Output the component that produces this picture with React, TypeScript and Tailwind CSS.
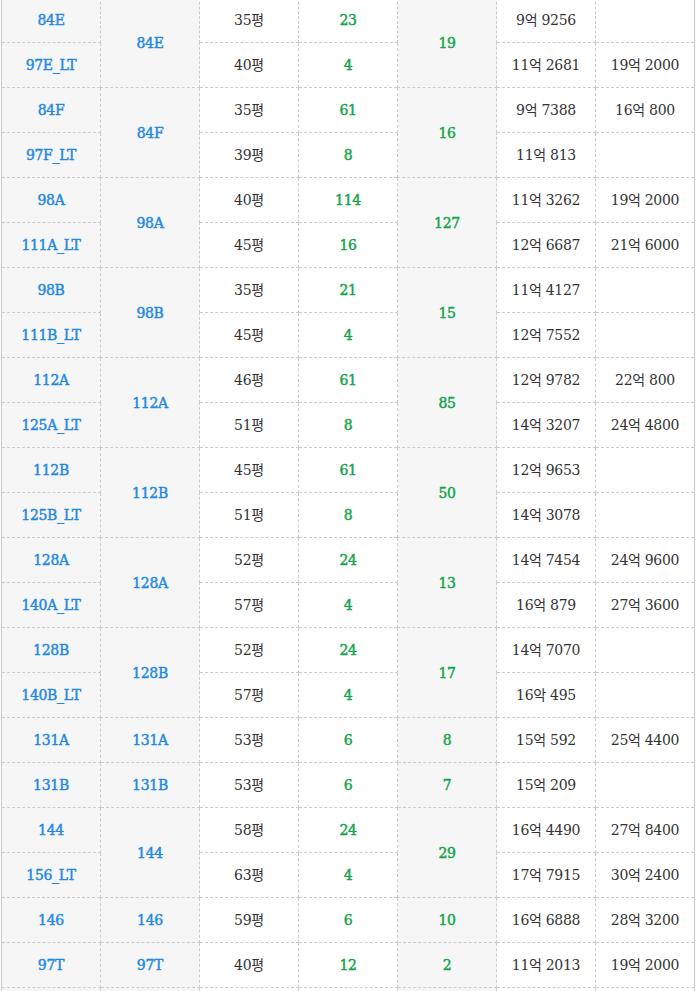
type Row = { type: string; size: string; count: string; p1: string; p2: string };
type Group = { name: string; total: string; rows: Row[] };

const groups: Group[] = [
  { name: "84E", total: "19", rows: [
    { type: "84E", size: "35평", count: "23", p1: "9억 9256", p2: "" },
    { type: "97E_LT", size: "40평", count: "4", p1: "11억 2681", p2: "19억 2000" },
  ] },
  { name: "84F", total: "16", rows: [
    { type: "84F", size: "35평", count: "61", p1: "9억 7388", p2: "16억 800" },
    { type: "97F_LT", size: "39평", count: "8", p1: "11억 813", p2: "" },
  ] },
  { name: "98A", total: "127", rows: [
    { type: "98A", size: "40평", count: "114", p1: "11억 3262", p2: "19억 2000" },
    { type: "111A_LT", size: "45평", count: "16", p1: "12억 6687", p2: "21억 6000" },
  ] },
  { name: "98B", total: "15", rows: [
    { type: "98B", size: "35평", count: "21", p1: "11억 4127", p2: "" },
    { type: "111B_LT", size: "45평", count: "4", p1: "12억 7552", p2: "" },
  ] },
  { name: "112A", total: "85", rows: [
    { type: "112A", size: "46평", count: "61", p1: "12억 9782", p2: "22억 800" },
    { type: "125A_LT", size: "51평", count: "8", p1: "14억 3207", p2: "24억 4800" },
  ] },
  { name: "112B", total: "50", rows: [
    { type: "112B", size: "45평", count: "61", p1: "12억 9653", p2: "" },
    { type: "125B_LT", size: "51평", count: "8", p1: "14억 3078", p2: "" },
  ] },
  { name: "128A", total: "13", rows: [
    { type: "128A", size: "52평", count: "24", p1: "14억 7454", p2: "24억 9600" },
    { type: "140A_LT", size: "57평", count: "4", p1: "16억 879", p2: "27억 3600" },
  ] },
  { name: "128B", total: "17", rows: [
    { type: "128B", size: "52평", count: "24", p1: "14억 7070", p2: "" },
    { type: "140B_LT", size: "57평", count: "4", p1: "16악 495", p2: "" },
  ] },
  { name: "131A", total: "8", rows: [
    { type: "131A", size: "53평", count: "6", p1: "15억 592", p2: "25억 4400" },
  ] },
  { name: "131B", total: "7", rows: [
    { type: "131B", size: "53평", count: "6", p1: "15억 209", p2: "" },
  ] },
  { name: "144", total: "29", rows: [
    { type: "144", size: "58평", count: "24", p1: "16억 4490", p2: "27억 8400" },
    { type: "156_LT", size: "63평", count: "4", p1: "17억 7915", p2: "30억 2400" },
  ] },
  { name: "146", total: "10", rows: [
    { type: "146", size: "59평", count: "6", p1: "16억 6888", p2: "28억 3200" },
  ] },
  { name: "97T", total: "2", rows: [
    { type: "97T", size: "40평", count: "12", p1: "11억 2013", p2: "19억 2000" },
  ] },
  { name: "", total: "", rows: [
    { type: "", size: "", count: "", p1: "", p2: "" },
  ] },
];

// dashed grid cell, 45px rows
const cell = "h-[45px] border border-dashed border-[#cccccc] p-0 text-center align-middle";
const blue = "font-normal text-[#1e88e5] [-webkit-text-stroke:0.45px_#1e88e5]";
const green = "font-normal text-[#12a44a] [-webkit-text-stroke:0.45px_#12a44a]";
const plain = "font-normal text-[#333333]";

export default function App() {
  return (
    <div className="w-[696px] overflow-hidden bg-white" style={{ fontFamily: '"DejaVu Serif", "Noto Sans CJK KR", serif' }}>
      <table className="-mt-[3px] ml-px w-[693px] table-fixed border-collapse border-x border-solid border-x-[#c8c8c8] text-[14px] leading-5 tracking-[-0.3px]">
        <colgroup>
          {[0, 1, 2, 3, 4, 5, 6].map((i) => (
            <col key={i} className="w-[99px]" />
          ))}
        </colgroup>
        <tbody>
          {groups.map((g, gi) =>
            g.rows.map((r, ri) => (
              <tr key={`${gi}-${ri}`}>
                <td className={`${cell} bg-[#f6f6f6] ${blue}`}>{r.type}</td>
                {ri === 0 && (
                  <td rowSpan={g.rows.length} className={`${cell} bg-[#f6f6f6] ${blue}`}>
                    {g.name}
                  </td>
                )}
                <td className={`${cell} ${plain}`}>{r.size}</td>
                <td className={`${cell} ${green}`}>{r.count}</td>
                {ri === 0 && (
                  <td rowSpan={g.rows.length} className={`${cell} bg-[#f6f6f6] ${green}`}>
                    {g.total}
                  </td>
                )}
                <td className={`${cell} ${plain}`}>{r.p1}</td>
                <td className={`${cell} ${plain}`}>{r.p2}</td>
              </tr>
            ))
          )}
        </tbody>
      </table>
    </div>
  );
}
